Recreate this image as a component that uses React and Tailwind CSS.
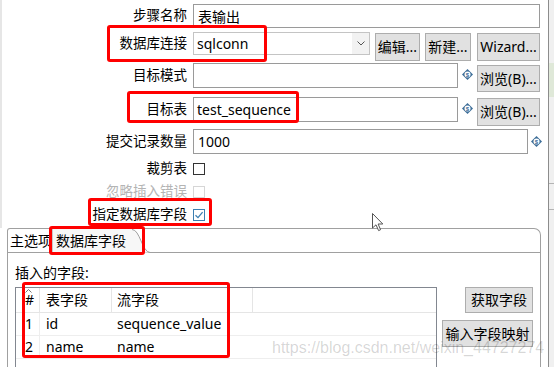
import React from "react";

// small blue "$" variable marker used by Kettle dialogs
function VarIcon() {
  return (
    <svg width="11" height="11" viewBox="0 0 11 11" className="shrink-0">
      <path d="M5.5 0 L11 5.5 L5.5 11 L0 5.5 Z" fill="#3d6e98" />
      <circle cx="5.5" cy="5.5" r="3" fill="#ffffff" />
      <text x="5.5" y="7.6" textAnchor="middle" fontSize="6" fontWeight="700" fill="#3d6e98" fontFamily="Liberation Sans, sans-serif">
        $
      </text>
    </svg>
  );
}

function Btn({ children, className }) {
  return (
    <div className={"flex items-center justify-center bg-[#e1e1e1] border border-[#adadad] text-[14px] leading-none text-black shrink-0 " + className}>
      {children}
    </div>
  );
}

function Label({ children, dim }) {
  return (
    <div className={"w-[180px] shrink-0 text-right text-[13.5px] leading-none " + (dim ? "text-[#b4b4b4]" : "text-black")}>
      {children}
    </div>
  );
}

function CheckBox({ checked, disabled }) {
  return (
    <div
      className={
        "ml-[6px] w-[12px] h-[12px] border bg-white flex items-center justify-center " +
        (disabled ? "border-[#d6d6d6]" : checked ? "border-[#3c7fb1]" : "border-[#333333]")
      }
    >
      {checked && (
        <svg width="10" height="10" viewBox="0 0 10 10">
          <path d="M1.5 5.2 L4 7.6 L8.6 2.2" stroke="#3c7fb1" strokeWidth="1.3" fill="none" />
        </svg>
      )}
    </div>
  );
}

function RedBox({ className }) {
  return <div className={"absolute border-[3px] border-[#ff0000] rounded-[3px] pointer-events-none " + className} />;
}

export default function App() {
  const rows = [
    { n: "1", a: "id", b: "sequence_value" },
    { n: "2", a: "name", b: "name" },
  ];

  return (
    <div className="relative w-[554px] h-[367px] overflow-hidden bg-white flex font-['Noto_Sans','Noto_Sans_CJK_SC',sans-serif]">
      {/* left edge of the window behind */}
      <div className="w-[7px] shrink-0 flex">
        <div className="w-[2px] h-[228px] bg-[#e6e6e6]" />
      </div>

      {/* dialog body */}
      <div className="w-[541px] shrink-0 flex flex-col">
        {/* 步骤名称 */}
        <div className="shrink-0 mt-[4px] h-[24px] flex items-center">
          <Label>步骤名称</Label>
          <div className="ml-[6px] w-[347px] h-[24px] border border-[#9a9a9a] flex items-center pl-[4px] text-[14px]">表输出</div>
        </div>

        {/* 数据库连接 */}
        <div className="shrink-0 mt-[4px] h-[29px] flex items-start">
          <div className="h-[23px] flex items-center">
            <Label>数据库连接</Label>
          </div>
          <div className="ml-[6px] w-[177px] h-[23px] border border-[#c4c4c4] flex items-center text-[14px]">
            <div className="flex-1 pl-[3px]">sqlconn</div>
            <div className="w-[17px] h-full bg-[#f2f2f2] flex items-center justify-center">
              <svg width="8" height="5" viewBox="0 0 8 5">
                <path d="M0.5 0.5 L4 4 L7.5 0.5" stroke="#555" strokeWidth="1" fill="none" />
              </svg>
            </div>
          </div>
          <Btn className="ml-[5px] mt-[1px] w-[45px] h-[28px]">编辑...</Btn>
          <Btn className="ml-[5px] mt-[1px] w-[46px] h-[28px]">新建...</Btn>
          <Btn className="ml-[6px] mt-[1px] w-[63px] h-[28px]">Wizard...</Btn>
        </div>

        {/* 目标模式 */}
        <div className="shrink-0 mt-[2px] h-[29px] flex items-start">
          <div className="h-[25px] flex items-center">
            <Label>目标模式</Label>
          </div>
          <div className="ml-[6px] w-[265px] h-[25px] border border-[#9a9a9a]" />
          <div className="ml-[4px] mt-[6px]">
            <VarIcon />
          </div>
          <Btn className="ml-[4px] mt-[2px] w-[63px] h-[27px]">浏览(B)...</Btn>
        </div>

        {/* 目标表 */}
        <div className="shrink-0 mt-[5px] h-[30px] flex items-start">
          <div className="h-[25px] flex items-center">
            <Label>目标表</Label>
          </div>
          <div className="ml-[6px] w-[265px] h-[25px] border border-[#9a9a9a] flex items-center pl-[3px] text-[14px]">test_sequence</div>
          <div className="ml-[4px] mt-[6px]">
            <VarIcon />
          </div>
          <Btn className="ml-[4px] mt-[1px] w-[63px] h-[28px]">浏览(B)...</Btn>
        </div>

        {/* 提交记录数量 */}
        <div className="shrink-0 mt-[2px] h-[25px] flex items-center">
          <Label>提交记录数量</Label>
          <div className="ml-[6px] w-[335px] h-[25px] border border-[#9a9a9a] flex items-center pl-[4px] text-[14px]">1000</div>
          <div className="ml-[3px]">
            <VarIcon />
          </div>
        </div>

        {/* checkboxes */}
        <div className="shrink-0 mt-[3px] h-[23px] flex items-center">
          <Label>裁剪表</Label>
          <CheckBox />
        </div>
        <div className="shrink-0 h-[23px] flex items-center">
          <Label dim>忽略插入错误</Label>
          <CheckBox disabled />
        </div>
        <div className="shrink-0 h-[23px] flex items-center">
          <Label>指定数据库字段</Label>
          <CheckBox checked />
        </div>

        {/* tab folder */}
        <div className="shrink-0 mt-[2px] mr-[7px] h-[160px] border-t border-l border-r border-[#a0a0a0] rounded-tr-[7px] rounded-tl-[3px] flex flex-col">
          <div className="shrink-0 relative h-[24px] border-b border-[#a0a0a0] flex items-stretch text-[14px] leading-none">
            <div className="w-[45px] flex items-center pl-[2px] border-r border-[#c8c8c8]">主选项</div>
            <div className="w-[80px] flex items-center pl-[3px] bg-[#f7f7f7]">数据库字段</div>
            <svg width="18" height="24" viewBox="0 0 18 24" className="shrink-0 -ml-[1px]">
              <path d="M0 24 L0 0 C8 0, 10 23, 18 23.5 Z" fill="#f7f7f7" />
              <path d="M0 0.5 C8 0.5, 10 23, 18 23.5" stroke="#a0a0a0" strokeWidth="1" fill="none" />
            </svg>
          </div>

          <div className="shrink-0 flex flex-col pl-[7px] pr-[7px]">
            <div className="mt-[11px] h-[18px] flex items-center text-[14px] leading-none">插入的字段:</div>
            <div className="mt-[5px] flex items-start">
              {/* field mapping table */}
              <div className="w-[422px] h-[90px] border border-[#828790] text-[14px] leading-none">
                <div className="relative h-[25px] flex border-b border-[#e5e5e5]">
                  <div className="w-[24px] pl-[9px] flex items-center border-r border-[#e5e5e5]">#</div>
                  <svg width="7" height="4" viewBox="0 0 7 4" className="absolute left-[9px] top-[1px]">
                    <path d="M0.5 3.5 L3.5 0.5 L6.5 3.5" stroke="#777" strokeWidth="1" fill="none" />
                  </svg>
                  <div className="w-[72px] pl-[6px] flex items-center border-r border-[#e5e5e5]">表字段</div>
                  <div className="w-[141px] pl-[5px] flex items-center border-r border-[#e5e5e5]">流字段</div>
                  <div className="flex-1" />
                </div>
                {rows.map((r) => (
                  <div key={r.n} className="h-[23px] flex border-b border-[#eeeeee]">
                    <div className="w-[24px] pl-[9px] flex items-center border-r border-[#eeeeee]">{r.n}</div>
                    <div className="w-[72px] pl-[6px] flex items-center">{r.a}</div>
                    <div className="w-[141px] pl-[5px] flex items-center">{r.b}</div>
                    <div className="flex-1" />
                  </div>
                ))}
              </div>

              <div className="flex-1 flex flex-col items-end">
                <Btn className="w-[68px] h-[26px]">获取字段</Btn>
                <Btn className="mt-[7px] w-[91px] h-[27px]">输入字段映射</Btn>
              </div>
            </div>
          </div>
        </div>
      </div>

      {/* right edge: neighbouring window */}
      <div className="flex-1 border-l border-[#8c8c8c] bg-[#f0f0f0] flex flex-col">
        <div className="mt-[63px] h-[34px] bg-[#dfe8d8]" />
        <div className="mt-[86px] h-[1px] bg-[#b4b4b4]" />
        <div className="mt-[25px] h-[1px] bg-[#b4b4b4]" />
      </div>

      {/* annotations */}
      <RedBox className="left-[107px] top-[25px] w-[160px] h-[37px]" />
      <RedBox className="left-[127px] top-[91px] w-[172px] h-[32px]" />
      <RedBox className="left-[88px] top-[198px] w-[124px] h-[28px]" />
      <RedBox className="left-[49px] top-[226px] w-[96px] h-[29px]" />
      <RedBox className="left-[22px] top-[282px] w-[208px] h-[76px]" />

      {/* mouse pointer */}
      <svg width="12" height="19" viewBox="0 0 12 19" className="absolute left-[372px] top-[213px]">
        <path d="M0.5 0.5 L0.5 15 L4 11.8 L6.6 17.6 L8.6 16.7 L6.1 11 L10.8 11 Z" fill="#ffffff" stroke="#555" strokeWidth="1" strokeLinejoin="round" />
      </svg>

      {/* watermark */}
      <div className="absolute left-[272px] top-[340px] text-[16px] leading-none text-black/[0.17] font-['Liberation_Sans',sans-serif] pointer-events-none">
        https://blog.csdn.net/weixin_44727274
      </div>
    </div>
  );
}
